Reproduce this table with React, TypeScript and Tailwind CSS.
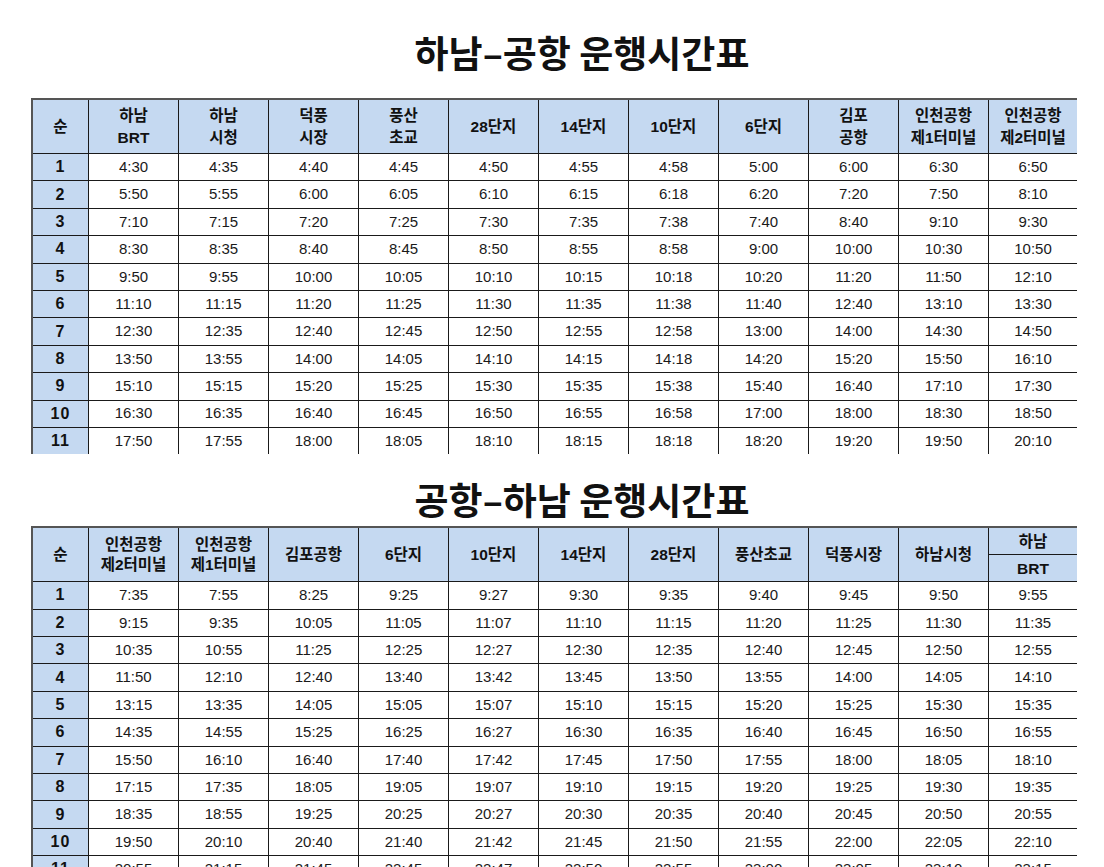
import React from "react";

const t1Headers: string[][] = [
  ["순"],
  ["하남", "BRT"],
  ["하남", "시청"],
  ["덕풍", "시장"],
  ["풍산", "초교"],
  ["28단지"],
  ["14단지"],
  ["10단지"],
  ["6단지"],
  ["김포", "공항"],
  ["인천공항", "제1터미널"],
  ["인천공항", "제2터미널"],
];

const t1Rows: string[][] = [
  ["4:30", "4:35", "4:40", "4:45", "4:50", "4:55", "4:58", "5:00", "6:00", "6:30", "6:50"],
  ["5:50", "5:55", "6:00", "6:05", "6:10", "6:15", "6:18", "6:20", "7:20", "7:50", "8:10"],
  ["7:10", "7:15", "7:20", "7:25", "7:30", "7:35", "7:38", "7:40", "8:40", "9:10", "9:30"],
  ["8:30", "8:35", "8:40", "8:45", "8:50", "8:55", "8:58", "9:00", "10:00", "10:30", "10:50"],
  ["9:50", "9:55", "10:00", "10:05", "10:10", "10:15", "10:18", "10:20", "11:20", "11:50", "12:10"],
  ["11:10", "11:15", "11:20", "11:25", "11:30", "11:35", "11:38", "11:40", "12:40", "13:10", "13:30"],
  ["12:30", "12:35", "12:40", "12:45", "12:50", "12:55", "12:58", "13:00", "14:00", "14:30", "14:50"],
  ["13:50", "13:55", "14:00", "14:05", "14:10", "14:15", "14:18", "14:20", "15:20", "15:50", "16:10"],
  ["15:10", "15:15", "15:20", "15:25", "15:30", "15:35", "15:38", "15:40", "16:40", "17:10", "17:30"],
  ["16:30", "16:35", "16:40", "16:45", "16:50", "16:55", "16:58", "17:00", "18:00", "18:30", "18:50"],
  ["17:50", "17:55", "18:00", "18:05", "18:10", "18:15", "18:18", "18:20", "19:20", "19:50", "20:10"],
];

const t2Headers: string[][] = [
  ["순"],
  ["인천공항", "제2터미널"],
  ["인천공항", "제1터미널"],
  ["김포공항"],
  ["6단지"],
  ["10단지"],
  ["14단지"],
  ["28단지"],
  ["풍산초교"],
  ["덕풍시장"],
  ["하남시청"],
  ["SPLIT"],
];

const t2Rows: string[][] = [
  ["7:35", "7:55", "8:25", "9:25", "9:27", "9:30", "9:35", "9:40", "9:45", "9:50", "9:55"],
  ["9:15", "9:35", "10:05", "11:05", "11:07", "11:10", "11:15", "11:20", "11:25", "11:30", "11:35"],
  ["10:35", "10:55", "11:25", "12:25", "12:27", "12:30", "12:35", "12:40", "12:45", "12:50", "12:55"],
  ["11:50", "12:10", "12:40", "13:40", "13:42", "13:45", "13:50", "13:55", "14:00", "14:05", "14:10"],
  ["13:15", "13:35", "14:05", "15:05", "15:07", "15:10", "15:15", "15:20", "15:25", "15:30", "15:35"],
  ["14:35", "14:55", "15:25", "16:25", "16:27", "16:30", "16:35", "16:40", "16:45", "16:50", "16:55"],
  ["15:50", "16:10", "16:40", "17:40", "17:42", "17:45", "17:50", "17:55", "18:00", "18:05", "18:10"],
  ["17:15", "17:35", "18:05", "19:05", "19:07", "19:10", "19:15", "19:20", "19:25", "19:30", "19:35"],
  ["18:35", "18:55", "19:25", "20:25", "20:27", "20:30", "20:35", "20:40", "20:45", "20:50", "20:55"],
  ["19:50", "20:10", "20:40", "21:40", "21:42", "21:45", "21:50", "21:55", "22:00", "22:05", "22:10"],
  ["20:55", "21:15", "21:45", "22:45", "22:47", "22:50", "22:55", "23:00", "23:05", "23:10", "23:15"],
];

function Timetable({
  headers,
  rows,
  headLeading,
}: {
  headers: string[][];
  rows: string[][];
  headLeading: string;
}) {
  return (
    <div className="ml-[31px] w-[1046px] border-t-2 border-l-2 border-[#555]">
      <div className="grid grid-cols-[55px_repeat(10,89px)_88px] gap-px bg-[#1a1a1a]">
        {headers.map((h, i) =>
          h[0] === "SPLIT" ? (
            <div key={i} className="flex h-[53px] flex-col bg-[#c5d9f1] font-['Liberation_Sans','Noto_Sans_CJK_KR',sans-serif] text-[15.5px] font-bold text-[#111]">
              <div className="flex h-[26px] items-center justify-center">하남</div>
              <div className="h-px bg-[#1a1a1a]" />
              <div className="flex flex-1 items-center justify-center">BRT</div>
            </div>
          ) : (
            <div
              key={i}
              className={`flex h-[53px] flex-col items-center justify-center bg-[#c5d9f1] font-['Liberation_Sans','Noto_Sans_CJK_KR',sans-serif] text-[15.5px] font-bold text-[#111] ${headLeading}`}
            >
              {h.map((line, j) => (
                <span key={j}>{line}</span>
              ))}
            </div>
          )
        )}
        {rows.map((r, ri) => (
          <React.Fragment key={ri}>
            <div className="flex h-[26.4px] items-center justify-center bg-[#c5d9f1] font-['Liberation_Sans',sans-serif] text-[16px] font-bold tracking-[1px] text-[#111]">
              {ri + 1}
            </div>
            {r.map((v, ci) => (
              <div
                key={ci}
                className="flex h-[26.4px] items-center justify-center bg-white font-['Liberation_Sans',sans-serif] text-[15px] text-[#1a1a1a]"
              >
                {v}
              </div>
            ))}
          </React.Fragment>
        ))}
      </div>
    </div>
  );
}

export default function App() {
  return (
    <div className="w-[1104px] bg-white pb-10">
      <div className="flex h-[98px] items-center justify-center pl-[60px] pt-[6px]">
        <h1 className="font-['Noto_Sans_CJK_KR',sans-serif] text-[37px] font-bold leading-none text-[#111]">
          하남–공항 운행시간표
        </h1>
      </div>
      <Timetable headers={t1Headers} rows={t1Rows} headLeading="leading-[22px]" />
      <div className="flex h-[72px] items-center justify-center pl-[60px] pt-[18px]">
        <h1 className="font-['Noto_Sans_CJK_KR',sans-serif] text-[37px] font-bold leading-none text-[#111]">
          공항–하남 운행시간표
        </h1>
      </div>
      <Timetable headers={t2Headers} rows={t2Rows} headLeading="leading-[20px]" />
    </div>
  );
}
